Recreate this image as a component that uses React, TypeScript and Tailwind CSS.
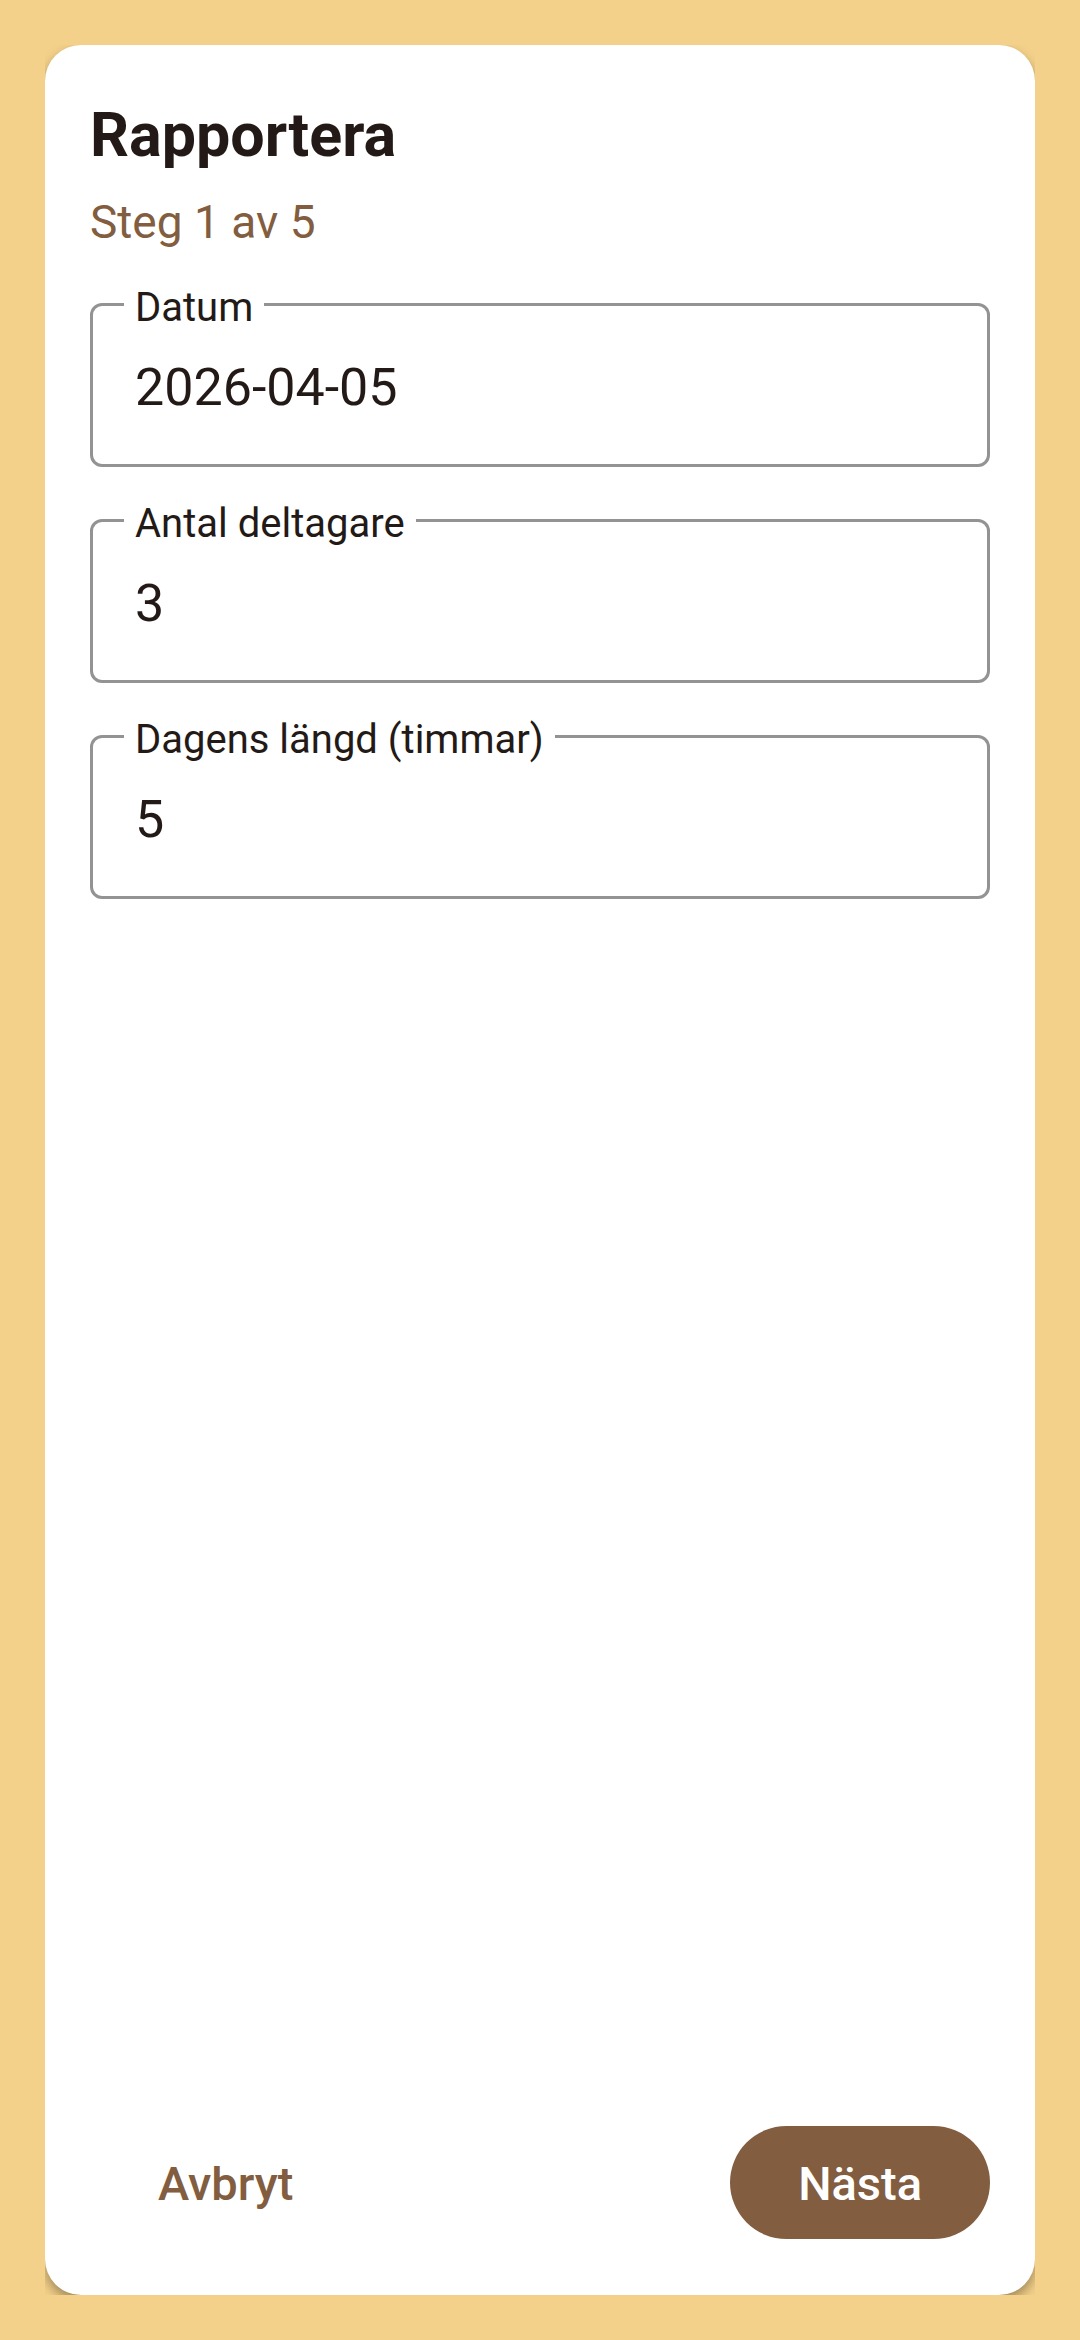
import { useId, useState } from "react";

type FieldProps = {
  label: string;
  initial: string;
  inputMode?: "text" | "numeric";
};

function OutlinedField({ label, initial, inputMode = "text" }: FieldProps) {
  const id = useId();
  const [value, setValue] = useState(initial);

  return (
    <div className="relative">
      <label
        htmlFor={id}
        className="absolute -top-5 left-[34px] bg-white px-[11px] text-[40px] leading-[50px] text-[#231a17]"
      >
        {label}
      </label>
      <input
        id={id}
        type="text"
        inputMode={inputMode}
        value={value}
        onChange={(event) => setValue(event.target.value)}
        className="block h-[164px] w-full rounded-[12px] border-3 border-[#939393] bg-white px-[42px] pt-1 text-[52px] text-[#231a17] outline-none"
      />
    </div>
  );
}

export default function App() {
  return (
    <div className="flex min-h-screen flex-col bg-[#f4d18a] p-[45px] font-['Roboto',sans-serif]">
      <div className="flex flex-1 flex-col overflow-hidden">
        <main className="flex flex-1 flex-col rounded-[36px] bg-white px-[45px] pt-[54px] pb-14 shadow-[0_6px_12px_rgba(0,0,0,0.35)]">
          <h1 className="text-[61px] leading-[72px] font-bold text-[#231a17]">
            Rapportera
          </h1>
          <p className="mt-6 text-[46px] leading-[54px] text-[#825d40]">
            Steg 1 av 5
          </p>

          <form
            id="report"
            className="mt-[54px] flex flex-col gap-[52px]"
            onSubmit={(event) => event.preventDefault()}
          >
            <OutlinedField label="Datum" initial="2026-04-05" />
            <OutlinedField label="Antal deltagare" initial="3" inputMode="numeric" />
            <OutlinedField label="Dagens längd (timmar)" initial="5" inputMode="numeric" />
          </form>

          <div className="mt-auto flex items-center justify-between text-[47px] font-medium">
            <button
              type="button"
              className="h-[113px] rounded-full px-[68px] pt-1 text-[#825d40]"
            >
              Avbryt
            </button>
            <button
              type="submit"
              form="report"
              className="h-[113px] rounded-full bg-[#825d40] px-[68px] pt-1 text-white"
            >
              Nästa
            </button>
          </div>
        </main>
      </div>
    </div>
  );
}
